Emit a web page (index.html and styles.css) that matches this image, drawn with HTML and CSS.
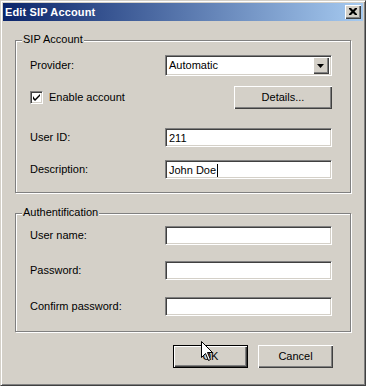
FILE: index.html
```html
<!DOCTYPE html>
<html>
<head>
<meta charset="utf-8">
<link rel="stylesheet" href="styles.css">
</head>
<body>
<div class="window">
  <div class="titlebar">
    <span class="title">Edit SIP Account</span>
    <span class="close"><svg width="8" height="7" viewBox="0 0 8 7"><path d="M0 0h2l2 2 2-2h2v1l-2.5 2.5L8 6v1H6L4 5 2 7H0V6l2.5-2.5L0 1z" fill="#000"/></svg></span>
  </div>
  <div class="client">
    <div class="group g1">
      <span class="legend">SIP Account</span>
      <div class="row r-provider">
        <span class="label">Provider:</span>
        <div class="combo"><span class="combo-text">Automatic</span><span class="combo-btn"><svg width="7" height="4" viewBox="0 0 7 4"><path d="M0 0h7L3.5 4z" fill="#000"/></svg></span></div>
      </div>
      <div class="row r-check">
        <span class="check"><span class="checkbox"><svg width="7" height="7" viewBox="0 0 7 7"><path d="M0 2v3l2 2 5-5V-0L2 5z" fill="#000"/></svg></span>Enable account</span>
        <span class="btn details">Details...</span>
      </div>
      <div class="row r-userid">
        <span class="label">User ID:</span>
        <div class="field">211</div>
      </div>
      <div class="row r-desc">
        <span class="label">Description:</span>
        <div class="field">John Doe<span class="caret"></span></div>
      </div>
    </div>
    <div class="group g2">
      <span class="legend">Authentification</span>
      <div class="row r-user">
        <span class="label">User name:</span>
        <div class="field"></div>
      </div>
      <div class="row r-pass">
        <span class="label">Password:</span>
        <div class="field"></div>
      </div>
      <div class="row r-confirm">
        <span class="label">Confirm password:</span>
        <div class="field"></div>
      </div>
    </div>
    <div class="buttons">
      <span class="btn default">OK</span>
      <span class="btn">Cancel</span>
    </div>
  </div>
  <svg class="cursor" width="12" height="20" viewBox="0 0 12 20"><path d="M0.5 0.5V16.5L4.5 12.5L7.5 19.5L9.5 18.5L6.5 11.5H11.5Z" fill="#fff" stroke="#000" stroke-width="1"/></svg>
</div>
</body>
</html>
```

FILE: styles.css
```css
html, body {
  margin: 0;
  padding: 0;
  background: #d4d0c8;
}
body {
  font-family: "Liberation Sans", Arial, sans-serif;
  font-size: 11px;
  line-height: 13px;
  color: #000;
}
.window {
  position: relative;
  width: 366px;
  height: 386px;
  box-sizing: border-box;
  border: 1px solid;
  border-color: #d4d0c8 #404040 #404040 #d4d0c8;
  box-shadow: inset 1px 1px #fff, inset -1px -1px #808080;
  padding: 2px;
  background: #d4d0c8;
  overflow: hidden;
}
.titlebar {
  height: 18px;
  display: flex;
  align-items: center;
  justify-content: space-between;
  padding: 0 2px 0 2px;
  background: linear-gradient(to right, #0a246a, #a6caf0);
}
.title {
  color: #fff;
  font-weight: bold;
  font-size: 11px;
  letter-spacing: 0.15px;
}
.close {
  width: 16px;
  height: 14px;
  box-sizing: border-box;
  background: #d4d0c8;
  box-shadow: inset 1px 1px #fff, inset -1px -1px #404040, inset -2px -2px #808080;
  display: flex;
  align-items: center;
  justify-content: center;
  padding: 0 1px 1px 0;
}
.close svg { display: block; }
.client {
  display: flex;
  flex-direction: column;
  padding: 19px 11px 0 12px;
}
.group {
  position: relative;
  border: 1px solid #808080;
  box-shadow: inset 1px 1px #fff, 1px 1px #fff;
  display: flex;
  flex-direction: column;
  padding: 0 0 0 14px;
  margin-right: 1px;
}
.g1 {
  height: 153px;
  box-sizing: border-box;
  padding-top: 14px;
}
.g2 {
  height: 119px;
  box-sizing: border-box;
  padding-top: 12px;
  margin-top: 20px;
}
.legend {
  position: absolute;
  top: -8px;
  left: 6px;
  padding: 0 1px;
  background: #d4d0c8;
}
.row {
  display: grid;
  grid-template-columns: 135px 167px;
  align-items: center;
}
.r-check { margin-top: 10px; }
.r-userid { margin-top: 19px; }
.r-desc { margin-top: 13px; }
.r-pass { margin-top: 16px; }
.r-confirm { margin-top: 17px; }
.combo {
  height: 21px;
  box-sizing: border-box;
  background: #fff;
  border: 1px solid;
  border-color: #808080 #fff #fff #808080;
  box-shadow: inset 1px 1px #404040, inset -1px -1px #d4d0c8;
  display: flex;
  align-items: center;
  justify-content: space-between;
  padding: 1px 2px 1px 2px;
}
.combo-text { padding-left: 1px; }
.combo-btn {
  width: 16px;
  height: 17px;
  box-sizing: border-box;
  background: #d4d0c8;
  box-shadow: inset 1px 1px #fff, inset -1px -1px #404040, inset -2px -2px #808080;
  display: flex;
  align-items: center;
  justify-content: center;
  padding-right: 1px;
}
.combo-btn svg { display: block; }
.field {
  height: 19px;
  box-sizing: border-box;
  background: #fff;
  border: 1px solid;
  border-color: #808080 #fff #fff #808080;
  box-shadow: inset 1px 1px #404040, inset -1px -1px #d4d0c8;
  padding: 2px 3px 0 3px;
  display: flex;
  align-items: center;
}
.caret {
  display: inline-block;
  width: 1px;
  height: 13px;
  background: #000;
  margin-left: 1px;
}
.check {
  display: flex;
  align-items: center;
}
.checkbox {
  width: 13px;
  height: 13px;
  box-sizing: border-box;
  background: #fff;
  border: 1px solid;
  border-color: #808080 #fff #fff #808080;
  box-shadow: inset 1px 1px #404040, inset -1px -1px #d4d0c8;
  display: flex;
  align-items: center;
  justify-content: center;
  margin-right: 6px;
}
.checkbox svg { display: block; }
.btn {
  display: flex;
  align-items: center;
  justify-content: center;
  box-sizing: border-box;
  height: 23px;
  width: 75px;
  background: #d4d0c8;
  box-shadow: inset 1px 1px #fff, inset -1px -1px #404040, inset -2px -2px #808080;
}
.details {
  width: 98px;
  justify-self: end;
}
.default {
  border: 1px solid #000;
}
.buttons {
  display: flex;
  justify-content: flex-end;
  gap: 10px;
  margin-top: 13px;
  padding-right: 19px;
}
.cursor {
  position: absolute;
  left: 200px;
  top: 340px;
  display: block;
}
```
